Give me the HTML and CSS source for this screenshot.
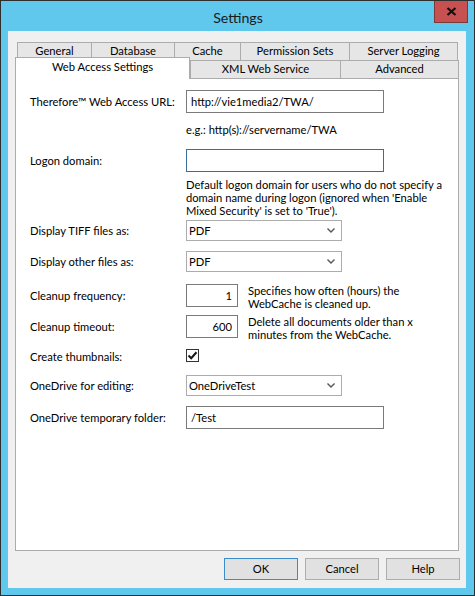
FILE: index.html
```html
<!DOCTYPE html>
<html>
<head>
<meta charset="utf-8">
<title>Settings</title>
<link rel="stylesheet" href="styles.css">
</head>
<body>
<div class="window">
  <div class="titlebar">
    <div class="title">Settings</div>
    <div class="close">
      <svg width="11" height="9" viewBox="0 0 11 9"><path d="M1.5 1 L9.5 8 M9.5 1 L1.5 8" stroke="#111" stroke-width="2.2" fill="none"/></svg>
    </div>
  </div>
  <div class="client">
    <div class="tabrow row1">
      <div class="tab t-general">General</div>
      <div class="tab t-database">Database</div>
      <div class="tab t-cache">Cache</div>
      <div class="tab t-perm">Permission Sets</div>
      <div class="tab t-log">Server Logging</div>
    </div>
    <div class="tabrow row2">
      <div class="tab selected t-web">Web Access Settings</div>
      <div class="tab t-xml">XML Web Service</div>
      <div class="tab t-adv">Advanced</div>
    </div>
    <div class="panel">
      <div class="form">
        <div class="row r-url">
          <div class="label">Therefore™ Web Access URL:</div>
          <div class="field"><div class="edit wide">http://vie1media2/TWA/</div></div>
        </div>
        <div class="row r-eg">
          <div class="label"></div>
          <div class="field hint">e.g.: http(s)://servername/TWA</div>
        </div>
        <div class="row r-logon">
          <div class="label">Logon domain:</div>
          <div class="field"><div class="edit wide focus"></div></div>
        </div>
        <div class="row r-desc">
          <div class="label"></div>
          <div class="field desc">Default logon domain for users who do not specify a<br>domain name during logon (ignored when 'Enable<br>Mixed Security' is set to 'True').</div>
        </div>
        <div class="row r-tiff">
          <div class="label">Display TIFF files as:</div>
          <div class="field"><div class="combo"><span>PDF</span><svg width="8" height="5" viewBox="0 0 8 5"><path d="M0.5 0.5 L4 4 L7.5 0.5" stroke="#555" stroke-width="1.4" fill="none"/></svg></div></div>
        </div>
        <div class="row r-other">
          <div class="label">Display other files as:</div>
          <div class="field"><div class="combo"><span>PDF</span><svg width="8" height="5" viewBox="0 0 8 5"><path d="M0.5 0.5 L4 4 L7.5 0.5" stroke="#555" stroke-width="1.4" fill="none"/></svg></div></div>
        </div>
        <div class="row r-freq">
          <div class="label">Cleanup frequency:</div>
          <div class="field inline"><div class="edit num">1</div><div class="desc side">Specifies how often (hours) the<br>WebCache is cleaned up.</div></div>
        </div>
        <div class="row r-timeout">
          <div class="label">Cleanup timeout:</div>
          <div class="field inline"><div class="edit num">600</div><div class="desc side">Delete all documents older than x<br>minutes from the WebCache.</div></div>
        </div>
        <div class="row r-thumb">
          <div class="label">Create thumbnails:</div>
          <div class="field"><div class="check"><svg width="11" height="11" viewBox="0 0 11 11"><path d="M1.5 5.5 L4.2 8.3 L9.5 2.2" stroke="#1a1a1a" stroke-width="2.1" fill="none"/></svg></div></div>
        </div>
        <div class="row r-od">
          <div class="label">OneDrive for editing:</div>
          <div class="field"><div class="combo"><span>OneDriveTest</span><svg width="8" height="5" viewBox="0 0 8 5"><path d="M0.5 0.5 L4 4 L7.5 0.5" stroke="#555" stroke-width="1.4" fill="none"/></svg></div></div>
        </div>
        <div class="row r-tmp">
          <div class="label">OneDrive temporary folder:</div>
          <div class="field"><div class="edit wide">/Test</div></div>
        </div>
      </div>
    </div>
    <div class="buttons">
      <div class="btn default">OK</div>
      <div class="btn">Cancel</div>
      <div class="btn">Help</div>
    </div>
  </div>
</div>
</body>
</html>
```

FILE: styles.css
```css
* { box-sizing: border-box; }
html, body { margin: 0; padding: 0; background: #fff; }
body {
  font-family: Lato, "Noto Sans", sans-serif;
  font-size: 11.2px;
  color: #000;
}
.window {
  width: 475px;
  height: 596px;
  border: 1px solid #2e2e2e;
  background: #60c7ed;
  padding: 0 8px 7px 7px;
  position: relative;
}
.titlebar {
  height: 30px;
  display: flex;
  align-items: center;
  justify-content: center;
}
.title {
  font-size: 14.2px;
  color: #1b1b1b;
  margin-top: 2px;
  margin-left: 2px;
}
.close {
  position: absolute;
  top: 0;
  right: 6px;
  width: 34px;
  height: 22px;
  background: #c75050;
  border: 1px solid #7a3a3a;
  border-top: none;
  display: flex;
  align-items: center;
  justify-content: center;
}
.client {
  height: 557px;
  background: #f0f0f0;
  padding: 11px 7px 7px 7px;
  display: flex;
  flex-direction: column;
}
.tabrow {
  display: flex;
  align-items: flex-start;
}
.row1 { margin-left: 2px; height: 18px; }
.row2 { margin-top: -3px; height: 22px; }
.tab {
  height: 18px;
  border: 1px solid #acacac;
  border-bottom: none;
  background: #e6e6e6;
  margin-right: -1px;
  display: flex;
  align-items: center;
  justify-content: center;
  line-height: 1;
  padding-bottom: 1px;
  white-space: nowrap;
}
.row2 .tab { margin-top: 3px; }
.row2 .tab.selected {
  margin-top: 0;
  height: 22px;
  background: #fff;
  position: relative;
  z-index: 1;
  padding-bottom: 4px;
  margin-right: 0;
}
.t-general { width: 75px; }
.t-database { width: 84px; }
.t-cache { width: 67px; }
.t-perm { width: 110px; }
.t-log { width: 109px; }
.t-web { width: 175px; }
.t-xml { width: 151px; }
.t-adv { width: 119px; margin-right: 0 !important; }
.panel {
  margin-top: -1px;
  height: 473px;
  border: 1px solid #acacac;
  background: #fff;
}
.form {
  padding-left: 14px;
  display: flex;
  flex-direction: column;
}
.row {
  display: grid;
  grid-template-columns: 156px 1fr;
  align-items: center;
}
.label { white-space: nowrap; }
.r-url { margin-top: 11px; }
.r-eg { margin-top: 9px; }
.r-logon { margin-top: 12px; }
.r-desc { margin-top: 6px; }
.r-tiff { margin-top: 3px; }
.r-other { margin-top: 10px; }
.r-freq { margin-top: 12px; }
.r-timeout { margin-top: 5px; }
.r-thumb { margin-top: 7px; height: 13px; }
.r-od { margin-top: 14px; }
.r-tmp { margin-top: 10px; }
.r-freq .label, .r-timeout .label { align-self: start; padding-top: 5px; }
.r-thumb .label { align-self: start; line-height: 13px; padding-top: 2px; }
.hint { line-height: 15px; }
.desc { line-height: 13px; white-space: nowrap; }
.edit {
  height: 23px;
  border: 1px solid #7a7a7a;
  background: #fff;
  display: flex;
  align-items: center;
  padding-left: 4px;
  padding-bottom: 1px;
  white-space: nowrap;
}
.edit.wide { width: 198px; }
.edit.focus { border-color: #3b6d99; }
.edit.num {
  width: 52px;
  justify-content: flex-end;
  padding-left: 0;
  padding-right: 5px;
  flex: none;
}
.inline {
  display: flex;
  align-items: flex-start;
  gap: 10px;
}
.side { padding-top: 0; }
.combo {
  width: 156px;
  height: 21px;
  border: 1px solid #acacac;
  background: #fff;
  display: flex;
  align-items: center;
  justify-content: space-between;
  padding: 0 6px 1px 2px;
}
.combo svg { margin-top: 1px; }
.check {
  width: 13px;
  height: 13px;
  border: 1px solid #333;
  background: #fff;
  display: flex;
  align-items: center;
  justify-content: center;
}
.buttons {
  margin-top: 7px;
  margin-right: -1px;
  display: flex;
  justify-content: flex-end;
  gap: 7px;
}
.btn {
  width: 74px;
  height: 22px;
  border: 1px solid #adadad;
  background: #e1e1e1;
  display: flex;
  align-items: center;
  justify-content: center;
  padding-bottom: 1px;
}
.btn.default { border-color: #3c8ccc; }
```
